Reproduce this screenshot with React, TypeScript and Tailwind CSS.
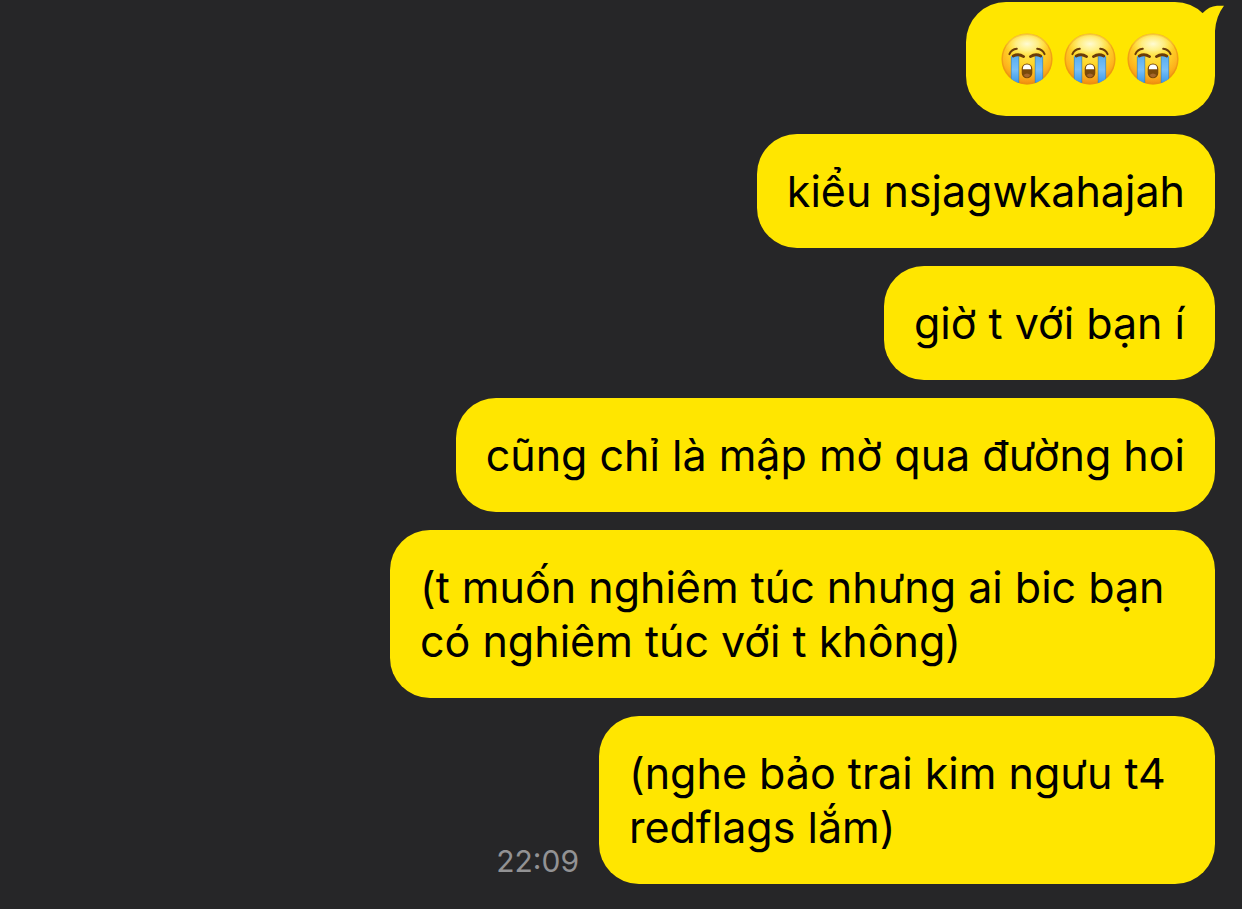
import React from "react";

type Message = { id: number; text: string; width?: string; time?: string };

const messages: Message[] = [
  { id: 2, text: "kiểu nsjagwkahajah" },
  { id: 3, text: "giờ t với bạn í" },
  { id: 4, text: "cũng chỉ là mập mờ qua đường hoi" },
  {
    id: 5,
    text: "(t muốn nghiêm túc nhưng ai bic bạn có nghiêm túc với t không)",
    width: "max-w-[825px]",
  },
  {
    id: 6,
    text: "(nghe bảo trai kim ngưu t4 redflags lắm)",
    width: "max-w-[616px]",
    time: "22:09",
  },
];

function CryingDefs() {
  return (
    <svg width="0" height="0" className="absolute" aria-hidden="true">
      <defs>
        <radialGradient id="face" cx="0.5" cy="0.3" r="0.72">
          <stop offset="0" stopColor="#ffe95a" />
          <stop offset="0.45" stopColor="#ffd62a" />
          <stop offset="0.75" stopColor="#fdb21c" />
          <stop offset="1" stopColor="#ef8510" />
        </radialGradient>
        <radialGradient id="shine" cx="0.5" cy="0.4" r="0.5">
          <stop offset="0" stopColor="#fffcdc" stopOpacity="0.95" />
          <stop offset="0.5" stopColor="#fff7a8" stopOpacity="0.65" />
          <stop offset="1" stopColor="#ffe94f" stopOpacity="0" />
        </radialGradient>
        <linearGradient id="tear" x1="0" y1="0" x2="0" y2="1">
          <stop offset="0" stopColor="#5aaef0" />
          <stop offset="0.45" stopColor="#78c0f8" />
          <stop offset="1" stopColor="#2d8fe2" />
        </linearGradient>
        <clipPath id="head">
          <circle cx="31" cy="27" r="25.5" />
        </clipPath>
      </defs>
    </svg>
  );
}

function CryingFace() {
  return (
    <svg viewBox="0 0 63 54" className="h-[54px] w-[63px]" role="img" aria-label="loudly crying face">
      <circle cx="31" cy="27" r="25.5" fill="url(#face)" />
      <circle cx="31" cy="27" r="24.8" fill="none" stroke="#e8920f" strokeOpacity="0.6" strokeWidth="1.4" />
      <ellipse cx="31" cy="14.500" rx="23" ry="13" fill="url(#shine)" clipPath="url(#head)" />
      <g clipPath="url(#head)">
        <path d="M15 24h8v30h-8z" fill="url(#tear)" />
        <path d="M39 24h8v30h-8z" fill="url(#tear)" />
        <path
          d="M15.300 25v28M22.800 25v28M39.200 25v28M46.700 25v28"
          stroke="#4c7d8c"
          strokeWidth="0.8"
          opacity="0.75"
        />
      </g>
      <g fill="none" stroke="#6b3c09" strokeLinecap="round">
        <path d="M13.400 22.200Q15.500 17.300 20.800 16.800" strokeWidth="2" />
        <path d="M48.600 22.200Q46.500 17.300 41.200 16.800" strokeWidth="2" />
        <path d="M17.200 24Q22.500 21.300 27.600 24.600" strokeWidth="2.800" />
        <path d="M44.800 24Q39.500 21.300 34.400 24.600" strokeWidth="2.800" />
      </g>
      <rect x="25.700" y="31.500" width="10.600" height="14.800" rx="5.300" fill="#7b4a0a" />
      <path d="M26.900 37.200V36.500a4.100 3.900 0 0 1 8.200 0V37.200z" fill="#fff" />
      <path d="M27.600 43q3.400-3 6.800 0q-1.200 2.400-3.400 2.400t-3.400-2.400z" fill="#a5652b" />
    </svg>
  );
}

const bubble = "rounded-[40px] bg-[#ffe600] px-[30px] py-[30px]";

export default function App() {
  return (
    <main className="flex min-h-screen flex-col items-end gap-[18px] bg-[#262628] pt-[2px] pr-[27px] pb-[25px] font-['Inter',sans-serif] text-[43px] leading-[54px] text-black">
      <CryingDefs />
      <div className={`relative flex ${bubble}`}>
        <CryingFace />
        <CryingFace />
        <CryingFace />
        <svg
          viewBox="0 0 30 40"
          className="absolute top-0 -right-[10px] h-[40px] w-[30px]"
          aria-hidden="true"
        >
          <path
            d="M0 16L8 10.700C12 6.500 16.500 4 22 3.700L29 3.800Q21 14 20 29V40H0z"
            fill="#ffe600"
          />
        </svg>
      </div>
      {messages.map((m) => (
        <div key={m.id} className="flex items-end gap-5">
          {m.time && (
            <time className="pb-1 text-[30px] leading-[38px] text-[#929294]">{m.time}</time>
          )}
          <p className={`${bubble} ${m.width ?? ""}`}>{m.text}</p>
        </div>
      ))}
    </main>
  );
}
